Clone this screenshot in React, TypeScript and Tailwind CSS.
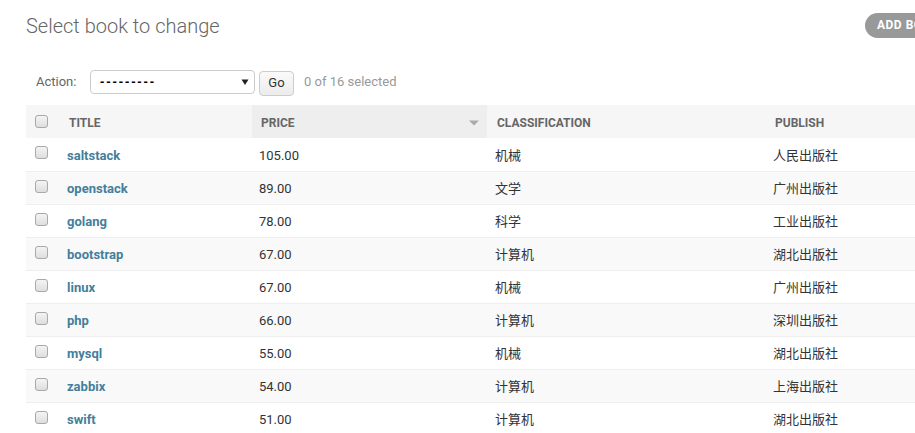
const books = [
  { title: "saltstack", price: "105.00", cls: "机械", publish: "人民出版社" },
  { title: "openstack", price: "89.00", cls: "文学", publish: "广州出版社" },
  { title: "golang", price: "78.00", cls: "科学", publish: "工业出版社" },
  { title: "bootstrap", price: "67.00", cls: "计算机", publish: "湖北出版社" },
  { title: "linux", price: "67.00", cls: "机械", publish: "广州出版社" },
  { title: "php", price: "66.00", cls: "计算机", publish: "深圳出版社" },
  { title: "mysql", price: "55.00", cls: "机械", publish: "湖北出版社" },
  { title: "zabbix", price: "54.00", cls: "计算机", publish: "上海出版社" },
  { title: "swift", price: "51.00", cls: "计算机", publish: "湖北出版社" },
];

function Checkbox() {
  return (
    <span className="block w-[13px] h-[13px] rounded-[3px] border border-[#a9a9a9] bg-gradient-to-b from-[#f4f4f4] to-[#dedede]" />
  );
}

export default function App() {
  return (
    <div className="w-[915px] h-[433px] overflow-hidden bg-white font-['Roboto','Noto_Sans_CJK_SC',sans-serif] text-[13px] text-[#333]">
      <div className="w-[1100px] pl-[26px] pt-[14px]">
        {/* Header */}
        <div className="flex items-start h-[25px]">
          <h1 className="w-[839px] text-[20px] leading-[25px] font-light text-[#666]">
            Select book to change
          </h1>
          <a className="-mt-[1px] h-[25px] px-[12px] rounded-full bg-[#999] text-white text-[12px] font-bold uppercase tracking-[0.5px] leading-[25px] whitespace-nowrap">
            Add book +
          </a>
        </div>

        {/* Actions */}
        <div className="mt-[27px] flex items-center h-[32px] pl-[10px] text-[#666]">
          <span className="w-[54px]">Action:</span>
          <div className="w-[165px] h-[24px] flex items-center justify-between border border-[#ccc] rounded-[4px] pl-[9px] pr-[5px] text-black">
            <span className="font-['Liberation_Sans',sans-serif] font-bold tracking-[1.9px]">---------</span>
            <svg width="8" height="8" viewBox="0 0 8 8">
              <path d="M0.5 1.5 H7.5 L4 7 Z" fill="#222" />
            </svg>
          </div>
          <button className="ml-[4px] w-[35px] h-[25px] mt-[2px] border border-[#ccc] rounded-[4px] bg-gradient-to-b from-[#fafafa] to-[#ececec] text-[13px] text-[#333]">
            Go
          </button>
          <span className="ml-[10px] text-[#999]">0 of 16 selected</span>
        </div>

        {/* Table */}
        <table className="mt-[7px] border-collapse w-[1000px] table-fixed">
          <colgroup>
            <col className="w-[33px]" />
            <col className="w-[193px]" />
            <col className="w-[235px]" />
            <col className="w-[278px]" />
            <col className="w-[261px]" />
          </colgroup>
          <thead>
            <tr className="h-[33px] bg-[#f6f6f6] text-[12px] font-bold uppercase text-[#666] text-left">
              <th className="pl-[9px] align-middle">
                <Checkbox />
              </th>
              <th className="pl-[10px] pt-[2px]">Title</th>
              <th className="pl-[9px] pt-[2px] bg-[#eee]">
                <div className="flex items-center justify-between pr-[8px]">
                  <span>Price</span>
                  <svg width="10" height="6" viewBox="0 0 10 6">
                    <path d="M0 0.5 H10 L5 5.5 Z" fill="#aaa" />
                  </svg>
                </div>
              </th>
              <th className="pl-[10px] pt-[2px]">Classification</th>
              <th className="pl-[10px] pt-[2px]">Publish</th>
            </tr>
          </thead>
          <tbody>
            {books.map((b, i) => (
              <tr
                key={b.title}
                className={`h-[33px] border-b border-[#eee] ${i % 2 === 1 ? "bg-[#f9f9f9]" : "bg-white"}`}
              >
                <td className="pl-[9px] align-top pt-[8px]">
                  <Checkbox />
                </td>
                <td className="pl-[8px] pt-[2px]">
                  <a className="font-bold text-[#447e9b]">{b.title}</a>
                </td>
                <td className="pl-[7px] pt-[2px]">{b.price}</td>
                <td className="pl-[8px] pt-[2px]">{b.cls}</td>
                <td className="pl-[8px] pt-[2px]">{b.publish}</td>
              </tr>
            ))}
          </tbody>
        </table>
      </div>
    </div>
  );
}
